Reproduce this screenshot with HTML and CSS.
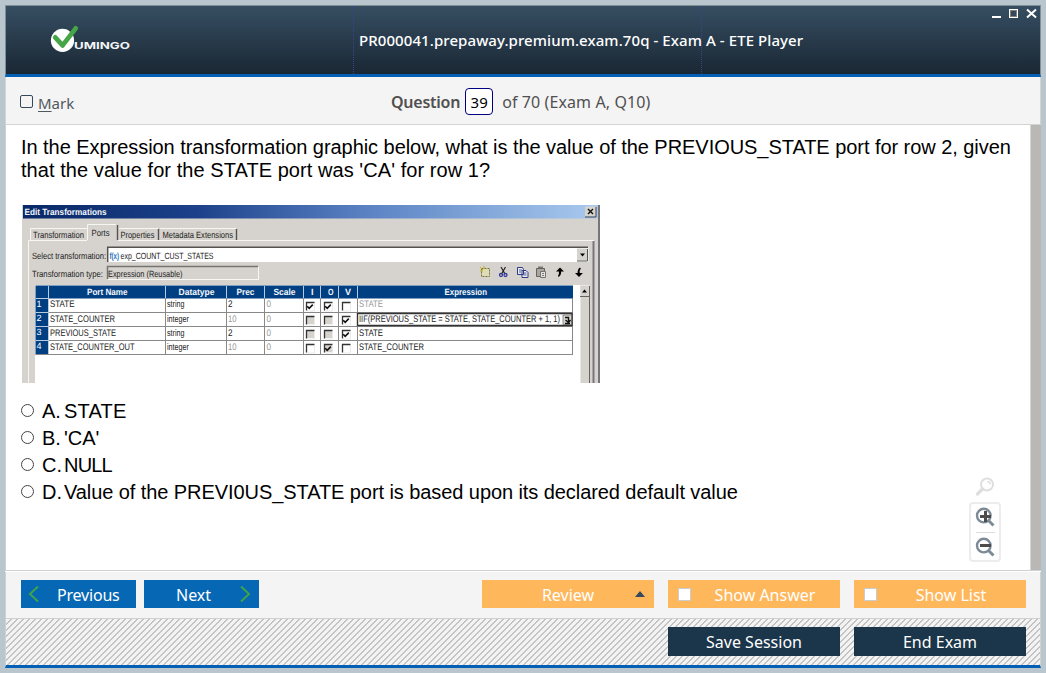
FILE: index.html
```html
<!DOCTYPE html>
<html lang="en">
<head>
<meta charset="utf-8">
<title>ETE Player</title>
<link rel="stylesheet" href="styles.css">
</head>
<body>
<div class="window">
  <header class="titlebar">
    <div class="brand">
      <svg width="84" height="30" viewBox="48 25 84 30">
        <circle cx="62.5" cy="40.4" r="11.6" fill="#fff"/>
        <path d="M55.2 37.4 L62.6 45.4 L75.7 28.4" fill="none" stroke="#46a546" stroke-width="4.8" stroke-linecap="round" stroke-linejoin="round"/>
        <text x="74" y="49" class="brand-text" textLength="56" lengthAdjust="spacingAndGlyphs">UMINGO</text>
      </svg>
    </div>
    <h1 class="title"><span>PR000041.prepaway.premium.exam.70q - Exam A - ETE Player</span></h1>
    <div class="controls">
      <svg width="48" height="14" viewBox="990 6 48 14" shape-rendering="crispEdges">
        <rect x="992" y="16" width="9" height="2" fill="#fff"/>
        <rect x="1009.5" y="9.500" width="8" height="8" fill="none" stroke="#fff"/>
        <rect x="1010.500" y="10.500" width="6" height="6" fill="#34495c" stroke="#857f7a"/>
        <path d="M1027 9.500l9 8M1036 9.500l-9 8" stroke="#fff" stroke-width="2" shape-rendering="auto"/>
      </svg>
    </div>
  </header>
  <div class="infobar">
    <label class="mark"><i class="mark-box"></i><span><u>M</u>ark</span></label>
    <div class="counter"><b>Question</b><span class="number">39</span><span class="total">of 70 (Exam A, Q10)</span></div>
  </div>
  <main class="content">
    <div class="page">
      <p class="question"><span class="q1">In the Expression transformation graphic below, what is the value of the PREVIOUS_STATE port for row 2, given</span><br><span class="q2">that the value for the STATE port was 'CA' for row 1?</span></p>
      <svg class="figure" width="578" height="178" viewBox="22 205 578 178">
        <defs>
          <linearGradient id="cap"><stop offset="0" stop-color="#082867"/><stop offset=".3" stop-color="#1c418a"/><stop offset=".6" stop-color="#5b83c4"/><stop offset="1" stop-color="#a9caee"/></linearGradient>
          <g id="box"><path d="M.5 8.500V.5H8.500" fill="none" stroke="#333" stroke-width="1.3"/><path d="M8.500 1v8H1" fill="none" stroke="#ddd" stroke-width=".6"/></g>
          <path id="tick" d="M2.200 4.200l2 2.200 3.600-3.800" fill="none" stroke="#111" stroke-width="1.600"/>
        </defs>
        <rect x="22" y="205" width="578" height="178" fill="#d6d3ce"/>
        <rect x="23" y="205" width="576" height="13.500" fill="url(#cap)"/>
        <text class="wb" x="24.500" y="215" textLength="82" lengthAdjust="spacingAndGlyphs">Edit Transformations</text>
        <rect x="585" y="206.500" width="11" height="10" fill="#d6d3ce"/><path d="M596 207v10H585" fill="none" stroke="#444"/>
        <path d="M588 209l5 5M593 209l-5 5" stroke="#111" stroke-width="1.400"/>
        <rect x="598" y="205" width="2" height="178" fill="#77757a"/>
        <path d="M28.500 383V240.500H87M118 240.500H594" stroke="#f7f6f2" fill="none"/>
        <path d="M30.500 240V228.500H87M87.500 240V224.500H116M119 228.500H158M160 228.500H236" stroke="#f7f6f2" fill="none"/>
        <path d="M117.500 225v15M158.500 229v11M236.500 229v11" stroke="#55524f" stroke-width="1.400"/>
        <path d="M593.500 241V383" stroke="#77757a" stroke-width="2"/>
        <text x="33" y="237.500" textLength="51" lengthAdjust="spacingAndGlyphs">Transformation</text>
        <text x="91.500" y="236" textLength="18" lengthAdjust="spacingAndGlyphs">Ports</text>
        <text x="120.500" y="237.500" textLength="34" lengthAdjust="spacingAndGlyphs">Properties</text>
        <text x="162.500" y="237.500" textLength="70.500" lengthAdjust="spacingAndGlyphs">Metadata Extensions</text>
        <text x="32" y="258.500" textLength="74" lengthAdjust="spacingAndGlyphs">Select transformation:</text>
        <rect x="107.500" y="247" width="481" height="15" fill="#fff"/><path d="M107.700 262V247.200H588" stroke="#55534f" stroke-width="1.500" fill="none"/>
        <text x="109.500" y="258.500" textLength="9.500" lengthAdjust="spacingAndGlyphs" class="fx">f(x)</text>
        <text x="120.500" y="258.500" textLength="93" lengthAdjust="spacingAndGlyphs">exp_COUNT_CUST_STATES</text>
        <rect x="577" y="248.500" width="10.500" height="12" fill="#d6d3ce"/><path d="M587.500 249v12H577" fill="none" stroke="#555"/><path d="M580 253.500h5l-2.500 3z"/>
        <text x="32" y="276.500" textLength="71" lengthAdjust="spacingAndGlyphs">Transformation type:</text>
        <path d="M107.500 279V266.500H258" fill="none" stroke="#77746f" stroke-width="1.500"/><path d="M258.500 267v12.500H108" fill="none" stroke="#f8f7f4"/>
        <text x="108" y="276.500" textLength="74.500" lengthAdjust="spacingAndGlyphs">Expression (Reusable)</text>
        <!-- Toolbar -->
        <path d="M481.500 268.500h8v8h-8z" fill="#dedbb8" stroke="#77742c" stroke-dasharray="2 1"/><path d="M480 267l3 3M484 266v3M480 271h3" stroke="#c0ad28"/>
        <path d="M501 267l4 7M505.500 267l-4 7" stroke="#222" stroke-width="1.200"/><circle cx="501" cy="275" r="1.500" fill="none" stroke="#343a98" stroke-width="1.300"/><circle cx="505.500" cy="275" r="1.500" fill="none" stroke="#343a98" stroke-width="1.300"/>
        <path d="M517.500 267.500h5l1 2v5h-6zM522 270.500h4l2 2v5h-6z" fill="#e9ebf7" stroke="#303a80"/><path d="M519 270h3M519 272h2M523.500 273h3M523.500 275h3" stroke="#303a80" stroke-width=".8"/>
        <path d="M536.500 268.500h8v8h-8z" fill="#aaa69f" stroke="#65615c"/><path d="M538 268h5v-1.500h-5z" fill="#777"/><path d="M540.500 271.500h5v6h-5z" fill="#e5e3df" stroke="#77736f"/><path d="M542 273.500h2M542 275.500h2" stroke="#777"/>
        <path d="M560 267.500l4 4h-2.800q0 4-2.700 5.500l-.5-1q1.300-2 .9-4.500H556z"/>
        <path d="M579 277l-4-4h2.600q-.2-4 2.400-5.500l.8 1q-1.600 2-1 4.500h3.100z"/>
        <!-- Port grid -->
        <rect x="35" y="285" width="545" height="98" fill="#fff"/>
        <rect x="35.500" y="285.500" width="537.500" height="13" fill="#003f82"/>
        <rect x="35.500" y="298" width="13" height="56.500" fill="#003f82"/>
        <path d="M48.500 312.500H573M48.500 326.500H573M48.500 340.500H573M35.500 354.500H573M165.500 298V354M226.500 298V354M264.500 298V354M303.500 298V354M320.500 298V354M338.500 298V354M357.500 298V354M572.500 298V354" stroke="#888" fill="none"/>
        <path d="M48.500 286V354M165.500 286v12M226.500 286v12M264.500 286v12M303.500 286v12M320.500 286v12M338.500 286v12M357.500 286v12M35.500 298.500H48M35.500 312.500H48M35.500 326.500H48M35.500 340.500H48" stroke="#b7cbe0" fill="none"/>
        <g class="wb"><text x="87" y="295" textLength="40.500" lengthAdjust="spacingAndGlyphs">Port Name</text><text x="178.500" y="295" textLength="36" lengthAdjust="spacingAndGlyphs">Datatype</text><text x="236.500" y="295" textLength="18" lengthAdjust="spacingAndGlyphs">Prec</text><text x="273.500" y="295" textLength="22" lengthAdjust="spacingAndGlyphs">Scale</text><text x="311" y="295">I</text><text x="328" y="295" textLength="5.500" lengthAdjust="spacingAndGlyphs">O</text><text x="345" y="295">V</text><text x="444.500" y="295" textLength="42.500" lengthAdjust="spacingAndGlyphs">Expression</text></g>
        <g class="rn"><text x="36.500" y="307">1</text><text x="36.500" y="321">2</text><text x="36.500" y="335">3</text><text x="36.500" y="349">4</text></g>
        <g class="cell"><text x="50" y="307" textLength="24.500" lengthAdjust="spacingAndGlyphs">STATE</text><text x="50" y="321.500" textLength="65" lengthAdjust="spacingAndGlyphs">STATE_COUNTER</text><text x="50" y="335.500" textLength="66" lengthAdjust="spacingAndGlyphs">PREVIOUS_STATE</text><text x="50" y="349.500" textLength="84.500" lengthAdjust="spacingAndGlyphs">STATE_COUNTER_OUT</text>
        <text x="167" y="307" textLength="17.500" lengthAdjust="spacingAndGlyphs">string</text><text x="167" y="321.500" textLength="22" lengthAdjust="spacingAndGlyphs">integer</text><text x="167" y="335.500" textLength="17.500" lengthAdjust="spacingAndGlyphs">string</text><text x="167" y="349.500" textLength="22" lengthAdjust="spacingAndGlyphs">integer</text>
        <text x="228" y="307" textLength="4.500" lengthAdjust="spacingAndGlyphs">2</text><text x="228" y="335.500" textLength="4.500" lengthAdjust="spacingAndGlyphs">2</text>
        <text x="359" y="321.500" textLength="201" lengthAdjust="spacingAndGlyphs">IIF(PREVIOUS_STATE = STATE, STATE_COUNTER + 1, 1)</text><text x="359" y="335.500" textLength="24" lengthAdjust="spacingAndGlyphs">STATE</text><text x="359" y="349.500" textLength="65" lengthAdjust="spacingAndGlyphs">STATE_COUNTER</text></g>
        <g class="dim"><text x="228" y="321.500" textLength="8.500" lengthAdjust="spacingAndGlyphs">10</text><text x="228" y="349.500" textLength="8.500" lengthAdjust="spacingAndGlyphs">10</text><text x="266.500" y="307" textLength="4.500" lengthAdjust="spacingAndGlyphs">0</text><text x="266.500" y="321.500" textLength="4.500" lengthAdjust="spacingAndGlyphs">0</text><text x="266.500" y="335.500" textLength="4.500" lengthAdjust="spacingAndGlyphs">0</text><text x="266.500" y="349.500" textLength="4.500" lengthAdjust="spacingAndGlyphs">0</text><text x="359" y="307" textLength="24" lengthAdjust="spacingAndGlyphs">STATE</text></g>
        <path d="M357.500 313.500H572V325.500H357.500z" fill="none" stroke="#333" stroke-width="1.400"/>
        <rect x="563" y="315" width="8.500" height="9.500" fill="#d6d3ce" stroke="#555" stroke-width=".6"/><path d="M565 317.500h3.500v4M565.500 320l3 2.500 2-2.500M565 323.500h5" fill="none" stroke="#111" stroke-width="1.400"/>
        <path d="M306 316h8v8h-8zM324 316h8v8h-8zM306 330h8v8h-8zM324 330h8v8h-8zM324 344h8v8h-8z" fill="#d6d3ce"/>
        <use href="#box" x="306" y="302"/><use href="#box" x="324" y="302"/><use href="#box" x="342" y="302"/>
        <use href="#box" x="306" y="316"/><use href="#box" x="324" y="316"/><use href="#box" x="342" y="316"/>
        <use href="#box" x="306" y="330"/><use href="#box" x="324" y="330"/><use href="#box" x="342" y="330"/>
        <use href="#box" x="306" y="344"/><use href="#box" x="324" y="344"/><use href="#box" x="342" y="344"/>
        <use href="#tick" x="305" y="302"/><use href="#tick" x="323" y="302"/><use href="#tick" x="341" y="316"/><use href="#tick" x="341" y="330"/><use href="#tick" x="323" y="344"/>
        <rect x="580" y="285" width="9.500" height="98" fill="#e9e7e4"/><rect x="580.500" y="286" width="9" height="10" fill="#d6d3ce"/><rect x="581" y="297" width="8" height="86" fill="#d6d3ce"/>
        <path d="M589.500 286V383M580 296.500h10" stroke="#66635f" fill="none"/><path d="M582 292.500h5l-2.500-3z"/>
      </svg>
      <div class="options">
        <label class="option"><i class="radio"></i><span class="letter">A.</span><span class="wide">STATE</span></label>
        <label class="option"><i class="radio"></i><span class="letter">B.</span><span>'CA'</span></label>
        <label class="option"><i class="radio"></i><span class="letter">C.</span><span class="tight">NULL</span></label>
        <label class="option"><i class="radio"></i><span class="letter">D.</span><span class="long">Value of the PREVI0US_STATE port is based upon its declared default value</span></label>
      </div>
      <div class="zoomer">
        <svg width="22" height="22" viewBox="0 0 22 22"><circle cx="13" cy="8.500" r="6" fill="none" stroke="#dedede" stroke-width="2"/><path d="M13.500 5.500q2.500.3 2.800 2.800" fill="none" stroke="#dedede" stroke-width="1.300"/><path d="M8.500 13l-5 5" stroke="#dedede" stroke-width="3.200" stroke-linecap="round"/></svg>
        <div class="zoom-panel">
          <svg width="20" height="20" viewBox="0 0 20 20"><circle cx="8.800" cy="8.600" r="6.800" fill="none" stroke="#7d8b97" stroke-width="2.400"/><path d="M13.500 13.500l5 5" stroke="#7d8b97" stroke-width="3"/><path d="M5 9.500h11M10.500 4v11" stroke="#4c4c4c" stroke-width="3"/></svg>
          <hr>
          <svg width="20" height="20" viewBox="0 0 20 20"><circle cx="8.800" cy="8.600" r="6.800" fill="none" stroke="#7d8b97" stroke-width="2.400"/><path d="M13.500 13.500l5 5" stroke="#7d8b97" stroke-width="3"/><path d="M5 8.500h11" stroke="#4c4c4c" stroke-width="3"/></svg>
        </div>
      </div>
    </div>
    <div class="scrollbar"></div>
  </main>
  <div class="actions">
    <button class="nav prev"><svg width="12" height="18" viewBox="0 0 12 18"><path d="M10 1.500L2 9l8 7.500" fill="none" stroke="#3fa34a" stroke-width="2"/></svg><span>Previous</span></button>
    <button class="nav next"><span>Next</span><svg width="12" height="18" viewBox="0 0 12 18"><path d="M2 1.500L10 9l-8 7.500" fill="none" stroke="#3fa34a" stroke-width="2"/></svg></button>
    <button class="tool review"><span>Review</span><i class="caret"></i></button>
    <button class="tool answer"><i class="check"></i><span>Show Answer</span></button>
    <button class="tool list"><i class="check"></i><span>Show List</span></button>
  </div>
  <footer class="session">
    <button class="dark save"><span>Save Session</span></button>
    <button class="dark end"><span>End Exam</span></button>
  </footer>
</div>
</body>
</html>
```
FILE: styles.css
```css
* { box-sizing: border-box; }
body {
  margin: 0;
  width: 1046px;
  height: 673px;
  padding: 5px;
  overflow: hidden;
  background: #b9c6cd;
  font-family: "Noto Sans", "Open Sans", sans-serif;
}
.window { width: 1036px; height: 663px; display: flex; flex-direction: column; background: #fff; }
.window > * { flex: none; }
.titlebar {
  height: 72px;
  display: grid;
  grid-template-columns: 348px 348px 1fr;
  border: 1px solid #7e8f95;
  border-bottom: 3px solid #0360b4;
  background: linear-gradient(#364e62, #1a2734);
}
.brand { padding: 19px 0 0 42px; border-right: 1px dotted #38458e; }
.brand svg { display: block; }
.brand-text { font: 700 9.5px Inter, sans-serif; fill: #f4f6f8; }
.title {
  margin: 0;
  padding: 23px 0 0 5px;
  border-right: 1px dotted #38458e;
  font-size: 15px;
  font-weight: 500;
  line-height: 22px;
  color: #fff;
  white-space: nowrap;
}
.title span { letter-spacing: 0.08px; }
.controls { display: flex; justify-content: flex-end; padding-right: 2px; }
.infobar {
  height: 48px;
  display: flex;
  align-items: center;
  padding: 2px 15px 0 14px;
  background: #f4f4f4;
  border: 1px solid #d3d3d3;
  border-top: 0;
}
.mark { width: 371px; display: flex; align-items: center; gap: 5px; font-size: 15px; color: #505860; padding-top: 2px; }
.mark-box { width: 13px; height: 13px; border: 1px solid #34495c; border-radius: 2px; margin-top: -2px; }
.mark u { text-underline-offset: 2px; }
.counter { display: flex; align-items: center; font-size: 16px; color: #505050; white-space: nowrap; }
.counter b { font-weight: 600; letter-spacing: -0.25px; }
.number {
  width: 28px;
  height: 27px;
  margin: 0 9px 0 5px;
  border: 1px solid #000080;
  border-radius: 4px;
  background: #fff;
  color: #000;
  font-size: 15px;
  line-height: 26px;
  text-align: center;
}
.total { letter-spacing: 0.1px; }
.content { height: 446px; display: flex; border-left: 1px solid #d0d0d0; border-bottom: 1px solid #d0d0d0; }
.page { width: 1025px; position: relative; padding: 11px 0 0 16px; border-right: 1px solid #d5d5d5; font-family: "Liberation Sans", Arial, sans-serif; color: #000; }
.scrollbar { width: 10px; background: #bab8b4; }
.question { margin: 0 0 0 -1px; height: 69px; font-size: 20px; line-height: 23px; white-space: nowrap; }
.q1 { letter-spacing: -0.05px; }
.q2 { letter-spacing: 0.06px; }
.figure { display: block; }
.figure text { font: 9px "Liberation Sans", Arial, sans-serif; fill: #222; text-rendering: geometricPrecision; }
.figure .fx { fill: #1b6fbb; font-weight: bold; }
.figure .wb, .figure .wb text { font-weight: bold; fill: #f4f7fc; }
.figure .rn text { fill: #fff; }
.figure .cell text { font-size: 9.5px; }
.figure .dim text { fill: #999; font-size: 9.5px; }
.options { padding-top: 15px; font-size: 20px; }
.option { height: 27px; display: flex; align-items: center; white-space: nowrap; }
.radio { width: 13px; height: 13px; margin: -3px 8px 0 -1px; border: 1px solid #444; border-radius: 50%; background: #fff; }
.letter { width: 22px; }
.wide { letter-spacing: 0.2px; }
.tight { letter-spacing: -0.8px; }
.long { letter-spacing: -0.075px; }
.zoomer { position: absolute; right: 29px; bottom: 8px; width: 32px; display: flex; flex-direction: column; align-items: center; gap: 4px; }
.zoom-panel { width: 32px; height: 60px; padding: 3px 4px; border: 2px solid #ececec; border-radius: 4px; display: flex; flex-direction: column; align-items: center; justify-content: space-between; }
.zoom-panel hr { width: 19px; margin: 0; border: 0; border-top: 1px solid #ddd; }
.actions {
  height: 47px;
  display: flex;
  align-items: flex-start;
  padding: 8px 14px 0 15px;
  margin-top: 1px;
  background: #f4f4f4;
  border: 1px solid #d0d0d0;
  border-top: 0;
}
button { border: 0; border-radius: 0; padding: 0; display: flex; align-items: center; font: 16px "Noto Sans", "Open Sans", sans-serif; color: #fff; white-space: nowrap; }
.nav { width: 115px; height: 28px; background: #0667b5; }
.nav span, .tool span { padding-top: 2px; }
.prev { margin-right: 8px; padding-left: 7px; gap: 17px; }
.prev span { letter-spacing: -0.2px; }
.next { margin-right: 223px; padding-left: 32px; justify-content: space-between; padding-right: 8px; }
.tool { width: 172px; height: 28px; background: #ffb75c; position: relative; justify-content: center; }
.answer, .list { margin-left: 14px; padding-left: 22px; }
.caret { position: absolute; right: 9px; top: 11px; border: 5px solid transparent; border-top: 0; border-bottom: 6px solid #34495c; }
.check { position: absolute; left: 10px; top: 8px; width: 13px; height: 13px; background: #fff; border: 1px solid #ccc; }
.session {
  height: 49px;
  display: flex;
  justify-content: flex-end;
  gap: 14px;
  padding: 8px 14px 0;
  border: 1px solid #d0d0d0;
  border-top: 0;
  border-bottom: 3px solid #0360b4;
  background: repeating-linear-gradient(135deg, #f3f3f3 0, #f3f3f3 3.200px, #c4c4c4 3.200px, #c4c4c4 4.243px);
}
.dark { width: 172px; height: 29px; background: #1b354a; justify-content: center; }
```
